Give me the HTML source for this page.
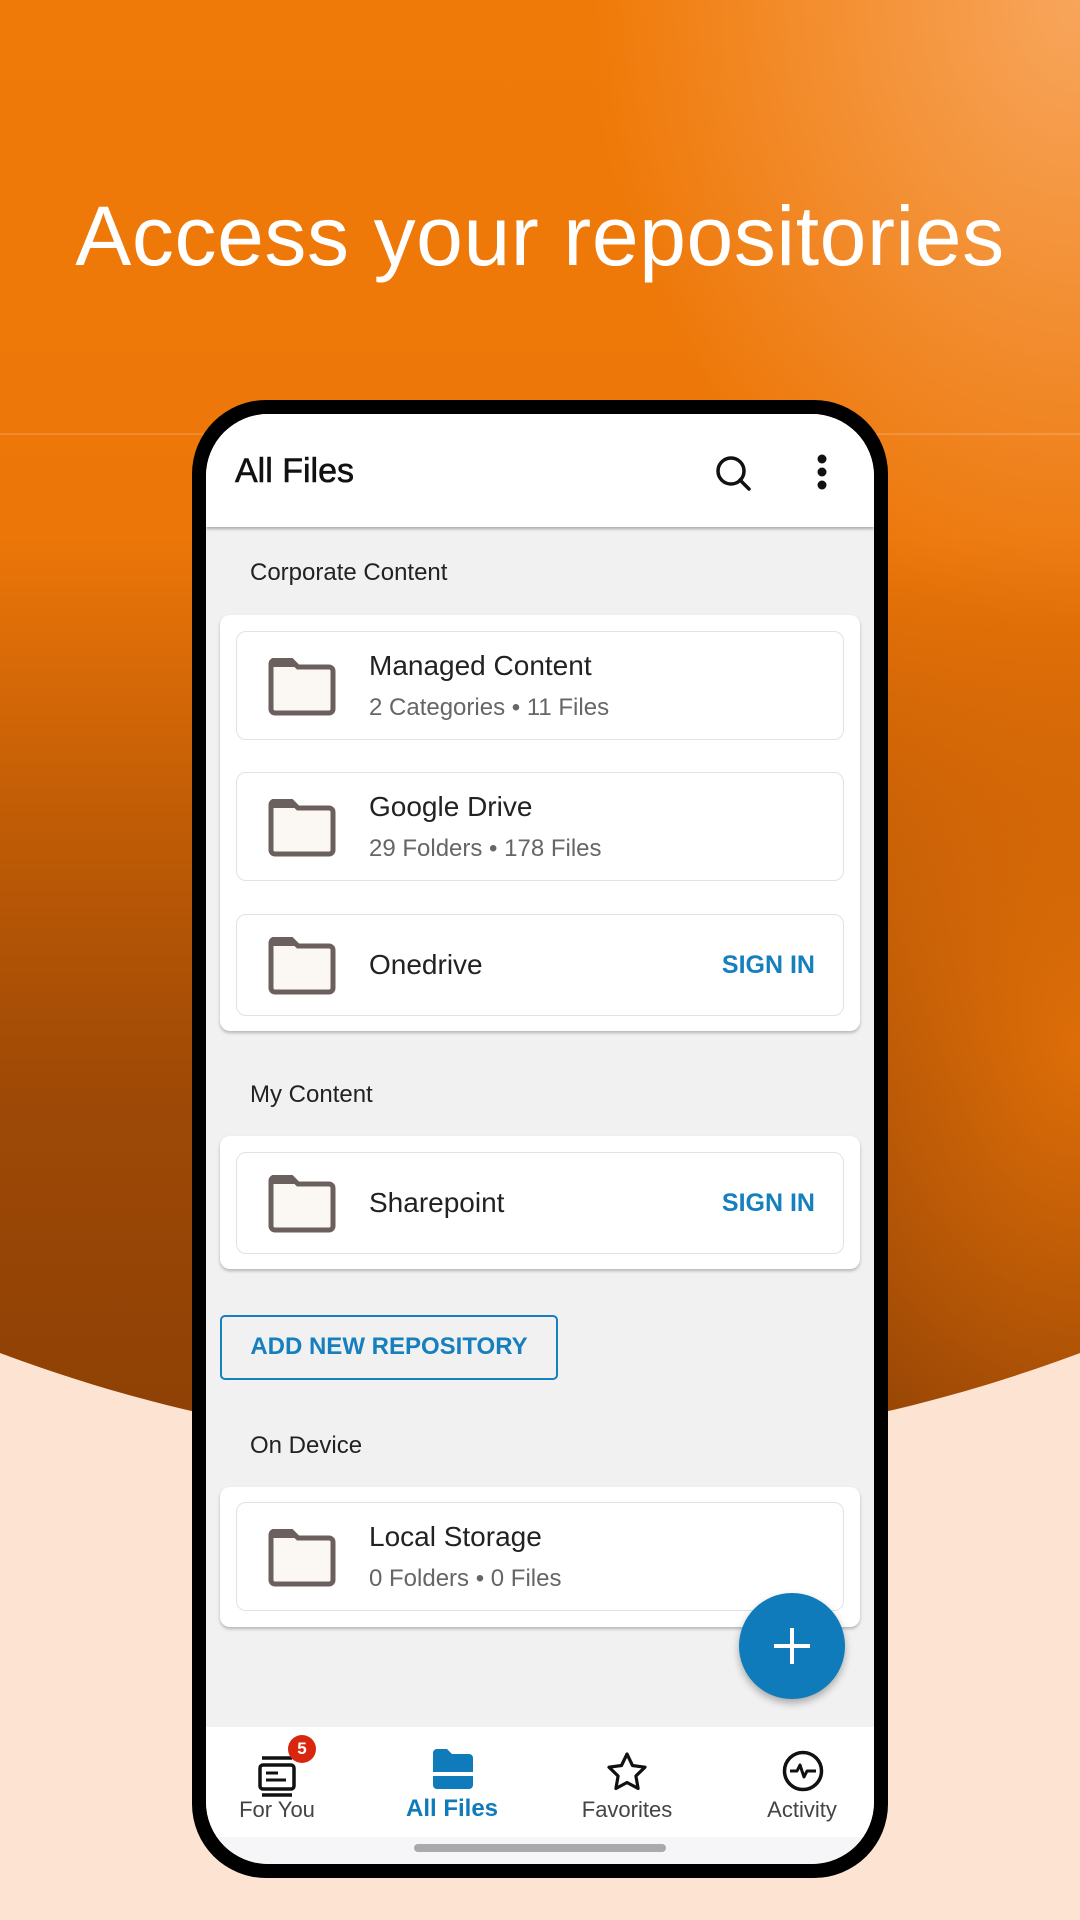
<!DOCTYPE html>
<html><head><meta charset="utf-8"><style>
*{margin:0;padding:0;box-sizing:border-box}
body{width:1080px;height:1920px;overflow:hidden;position:relative;font-family:"Liberation Sans",sans-serif;background:#fde3d2}
.bg{position:absolute;left:0;top:0;width:1080px;height:1920px;clip-path:circle(1537px at 540px -86px);
background:
radial-gradient(ellipse 700px 900px at 1080px 0px,rgba(250,180,120,.75),rgba(250,180,120,0) 70%),
radial-gradient(ellipse 450px 650px at 1080px 1050px,rgba(236,118,8,.8),rgba(236,118,8,0) 80%),
linear-gradient(to bottom,#f07a08 0%,#ec7608 28%,#c25d06 42%,#9e4906 57%,#8e4005 75%)}
.title{position:absolute;top:188px;left:0;width:1080px;text-align:center;color:#fff;font-size:84px;letter-spacing:0.6px}
.phone{position:absolute;left:192px;top:400px;width:696px;height:1478px;background:#000;border-radius:74px;padding:14px}
.screen{position:relative;width:100%;height:100%;background:#f1f1f1;border-radius:62px;overflow:hidden}
.hdr{position:absolute;left:0;top:0;width:100%;height:113px;background:#fff;box-shadow:0 2px 3px rgba(0,0,0,.3)}
.hdr .t{position:absolute;left:29px;top:38px;font-size:34px;color:#111;-webkit-text-stroke:0.6px #111}
.sec{position:absolute;left:44px;font-size:24px;color:#222}
.card{position:absolute;left:14px;width:640px;background:#fff;border-radius:10px;box-shadow:0 2px 3px rgba(0,0,0,.25)}
.item{position:absolute;left:16px;width:608px;border:1.5px solid #e2e2e2;border-radius:10px;background:#fff}
.item svg{position:absolute;left:30px;top:50%;margin-top:-28px}
.item .n{position:absolute;left:132px;font-size:28px;color:#222}
.item .s{position:absolute;left:132px;font-size:24px;color:#666}
.si{position:absolute;right:28px;top:50%;margin-top:-14px;font-size:25px;font-weight:bold;color:#1580bd}
.add{position:absolute;left:14px;top:901px;width:338px;height:65px;border:2.5px solid #1580bd;border-radius:5px;color:#1580bd;font-size:24px;font-weight:bold;text-align:center;line-height:60px}
.fab{position:absolute;left:533px;top:1179px;width:106px;height:106px;border-radius:50%;background:#0f7bbb;box-shadow:0 4px 8px rgba(0,0,0,.3)}
.nav{position:absolute;left:0;top:1313px;width:100%;height:110px;background:#fff}
.nav .l{position:absolute;top:70px;width:170px;margin-left:-85px;text-align:center;font-size:22px;color:#444}
.bar{position:absolute;left:0;top:1423px;width:100%;height:60px;background:#f6f6f8}
.hi{position:absolute;left:208px;top:1430px;width:252px;height:8px;border-radius:4px;background:#aaa}
</style></head><body>
<div class="bg"></div>
<div style="position:absolute;left:0;top:433px;width:1080px;height:2px;background:rgba(255,255,255,.15)"></div>
<div class="title">Access your repositories</div>
<div class="phone"><div class="screen">
<div class="hdr"><div class="t">All Files</div>
<svg style="position:absolute;left:508px;top:40px" width="40" height="40" viewBox="0 0 40 40"><circle cx="17" cy="17" r="13" fill="none" stroke="#111" stroke-width="3.5"/><line x1="26" y1="26" x2="35" y2="35" stroke="#111" stroke-width="3.5" stroke-linecap="round"/></svg>
<svg style="position:absolute;left:608px;top:38px" width="16" height="44"><circle cx="8" cy="7" r="4.5" fill="#111"/><circle cx="8" cy="20" r="4.5" fill="#111"/><circle cx="8" cy="33" r="4.5" fill="#111"/></svg>
</div>
<div class="sec" style="top:145px">Corporate Content</div>
<div class="card" style="top:201px;height:416px">
 <div class="item" style="top:16px;height:109px"><svg width="70" height="58" viewBox="0 0 70 58"><path d="M4 6a4 4 0 0 1 4-4h16l7 7h31a4 4 0 0 1 4 4v38a4 4 0 0 1-4 4H8a4 4 0 0 1-4-4z" fill="#fbf8f3" stroke="#6b605e" stroke-width="5"/><path d="M4 6a4 4 0 0 1 4-4h16l7 7H4z" fill="#6b605e"/></svg><div class="n" style="top:18px">Managed Content</div><div class="s" style="top:62px">2 Categories • 11 Files</div></div>
 <div class="item" style="top:157px;height:109px"><svg width="70" height="58" viewBox="0 0 70 58"><path d="M4 6a4 4 0 0 1 4-4h16l7 7h31a4 4 0 0 1 4 4v38a4 4 0 0 1-4 4H8a4 4 0 0 1-4-4z" fill="#fbf8f3" stroke="#6b605e" stroke-width="5"/><path d="M4 6a4 4 0 0 1 4-4h16l7 7H4z" fill="#6b605e"/></svg><div class="n" style="top:18px">Google Drive</div><div class="s" style="top:62px">29 Folders • 178 Files</div></div>
 <div class="item" style="top:299px;height:102px"><svg width="70" height="58" viewBox="0 0 70 58"><path d="M4 6a4 4 0 0 1 4-4h16l7 7h31a4 4 0 0 1 4 4v38a4 4 0 0 1-4 4H8a4 4 0 0 1-4-4z" fill="#fbf8f3" stroke="#6b605e" stroke-width="5"/><path d="M4 6a4 4 0 0 1 4-4h16l7 7H4z" fill="#6b605e"/></svg><div class="n" style="top:34px">Onedrive</div><div class="si">SIGN IN</div></div>
</div>
<div class="sec" style="top:667px">My Content</div>
<div class="card" style="top:722px;height:133px">
 <div class="item" style="top:16px;height:102px"><svg width="70" height="58" viewBox="0 0 70 58"><path d="M4 6a4 4 0 0 1 4-4h16l7 7h31a4 4 0 0 1 4 4v38a4 4 0 0 1-4 4H8a4 4 0 0 1-4-4z" fill="#fbf8f3" stroke="#6b605e" stroke-width="5"/><path d="M4 6a4 4 0 0 1 4-4h16l7 7H4z" fill="#6b605e"/></svg><div class="n" style="top:34px">Sharepoint</div><div class="si">SIGN IN</div></div>
</div>
<div class="add">ADD NEW REPOSITORY</div>
<div class="sec" style="top:1018px">On Device</div>
<div class="card" style="top:1073px;height:140px">
 <div class="item" style="top:15px;height:109px"><svg width="70" height="58" viewBox="0 0 70 58"><path d="M4 6a4 4 0 0 1 4-4h16l7 7h31a4 4 0 0 1 4 4v38a4 4 0 0 1-4 4H8a4 4 0 0 1-4-4z" fill="#fbf8f3" stroke="#6b605e" stroke-width="5"/><path d="M4 6a4 4 0 0 1 4-4h16l7 7H4z" fill="#6b605e"/></svg><div class="n" style="top:18px">Local Storage</div><div class="s" style="top:62px">0 Folders • 0 Files</div></div>
</div>
<div class="fab"><svg width="106" height="106"><line x1="53" y1="35" x2="53" y2="71" stroke="#fff" stroke-width="4"/><line x1="35" y1="53" x2="71" y2="53" stroke="#fff" stroke-width="4"/></svg></div>
<div class="nav">
 <svg style="position:absolute;left:50px;top:27px" width="44" height="44" viewBox="0 0 44 44"><line x1="6" y1="4" x2="36" y2="4" stroke="#111" stroke-width="3.5"/><rect x="4" y="11" width="34" height="24" rx="3" fill="none" stroke="#111" stroke-width="3.5"/><line x1="10" y1="19" x2="22" y2="19" stroke="#111" stroke-width="3"/><line x1="10" y1="26" x2="30" y2="26" stroke="#111" stroke-width="3"/><line x1="6" y1="41" x2="36" y2="41" stroke="#111" stroke-width="3.5"/></svg>
 <div style="position:absolute;left:82px;top:8px;width:28px;height:28px;border-radius:50%;background:#d9260f;color:#fff;font-size:17px;font-weight:bold;text-align:center;line-height:28px">5</div>
 <div class="l" style="left:71px">For You</div>
 <svg style="position:absolute;left:226px;top:21px" width="42" height="42" viewBox="0 0 42 42"><path d="M1 5a4 4 0 0 1 4-4h10l5 5h17a4 4 0 0 1 4 4v14H1z" fill="#0f7bbb"/><path d="M1 28h40v9a4 4 0 0 1-4 4H5a4 4 0 0 1-4-4z" fill="#0f7bbb"/></svg>
 <div class="l" style="left:246px;color:#0f7bbb;font-weight:bold;font-size:24px;top:68px">All Files</div>
 <svg style="position:absolute;left:400px;top:24px" width="42" height="42" viewBox="0 0 42 42"><path d="M21 3l5.5 11.5 12.5 1.7-9.1 8.8 2.2 12.5L21 31.5 9.9 37.5l2.2-12.5L3 16.2l12.5-1.7z" fill="none" stroke="#111" stroke-width="3.2" stroke-linejoin="round"/></svg>
 <div class="l" style="left:421px">Favorites</div>
 <svg style="position:absolute;left:575px;top:22px" width="44" height="44" viewBox="0 0 44 44"><circle cx="22" cy="22" r="18.5" fill="none" stroke="#111" stroke-width="3.5"/><path d="M9 22h7l3-6 4 12 3-6h9" fill="none" stroke="#111" stroke-width="3" stroke-linejoin="round"/></svg>
 <div class="l" style="left:596px">Activity</div>
</div>
<div class="bar"></div><div class="hi"></div>
</div></div>
</body></html>
